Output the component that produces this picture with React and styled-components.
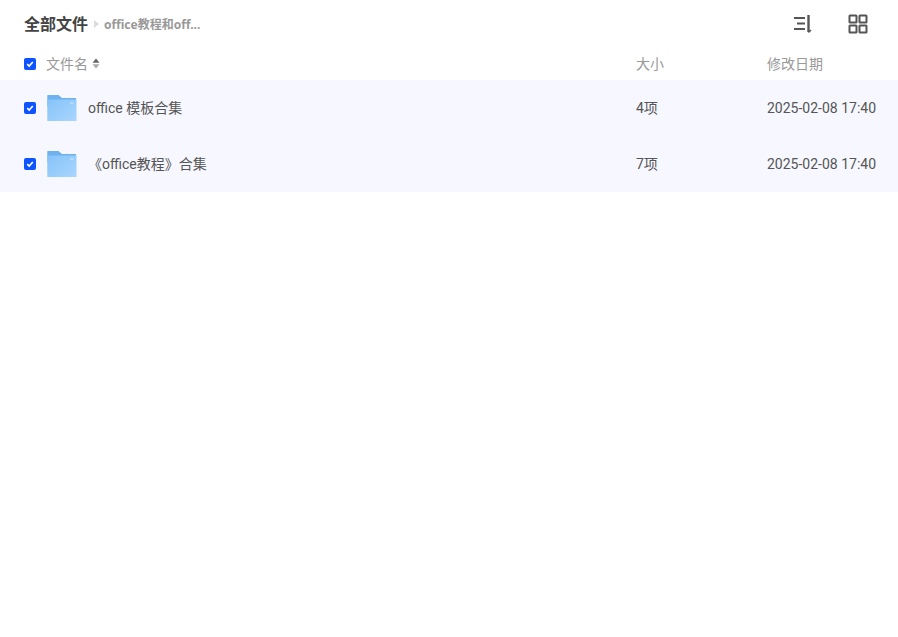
import React from "react";
import styled, { createGlobalStyle } from "styled-components";

const GlobalStyle = createGlobalStyle`
    html, body {
        margin: 0;
        padding: 0;
        background: #fff;
        font-family: Roboto, "Noto Sans CJK SC", sans-serif;
    }
`;

const Page = styled.div`
    width: 898px;
    height: 637px;
    overflow: hidden;
    background: #fff;
`;

const Header = styled.div`
    height: 48px;
    display: flex;
    align-items: center;
    justify-content: space-between;
    padding: 0 26px 0 24px;
`;

const Crumbs = styled.div`
    display: flex;
    align-items: center;
`;

const CrumbRoot = styled.span`
    font-size: 16px;
    font-weight: 700;
    color: #444;
    margin-bottom: 2px;
`;

const CrumbArrow = styled.span`
    width: 0;
    height: 0;
    margin: 0 5px 1px 6px;
    border-left: 5px solid #dcdcdc;
    border-top: 4px solid transparent;
    border-bottom: 4px solid transparent;
`;

const CrumbCurrent = styled.span`
    font-family: "Noto Sans", "Noto Sans CJK SC", sans-serif;
    font-size: 12px;
    font-weight: 700;
    color: #999;
`;

const Tools = styled.div`
    display: flex;
    align-items: center;
    gap: 28px;
`;

const ToolIcon = styled.svg`
    display: block;
    width: 28px;
    height: 28px;
    color: #555;
`;

const Grid = styled.div`
    display: grid;
    grid-template-columns: 612px 131px 1fr;
    align-items: center;
    padding-left: 24px;
    height: ${(props) => (props.$head ? "32px" : "56px")};
    background: ${(props) => (props.$selected ? "#f6f7ff" : "#fff")};
    font-size: 14px;
    color: ${(props) => (props.$head ? "#999" : "#555")};
`;

const NameCell = styled.div`
    display: flex;
    align-items: center;
`;

const Label = styled.span`
    margin-bottom: 2px;
`;

const Check = styled.span`
    width: 12px;
    height: 12px;
    flex: none;
    border-radius: 2px;
    background: #0d53ff;
    display: flex;
    align-items: center;
    justify-content: center;
`;

const HeadLabel = styled(Label)`
    margin-left: 10px;
`;

const SortMark = styled.svg`
    width: 8px;
    height: 11px;
    margin: 0 0 1px 4px;
`;

const FolderIcon = styled.svg`
    width: 30px;
    height: 28px;
    margin-left: 11px;
    flex: none;
`;

const FileName = styled(Label)`
    margin-left: 11px;
`;

function Tick() {
    return (
        <Check>
            <svg width="8" height="8" viewBox="0 0 8 8">
                <path d="M1.2 4.2 3.2 6.1 6.8 2" fill="none" stroke="#fff" strokeWidth="1.6" />
            </svg>
        </Check>
    );
}

function Folder({ id }) {
    return (
        <FolderIcon viewBox="0 0 30 28">
            <defs>
                <linearGradient id={id} x1="0" y1="0" x2="1" y2="1">
                    <stop offset="0" stopColor="#86c3f8" />
                    <stop offset="1" stopColor="#a9d6fe" />
                </linearGradient>
            </defs>
            <path d="M.3 1.5Q.3 1 .8 1H11.5L15 4H29V12H.3Z" fill="#6db2ef" />
            <path d="M.3 5.5H29.5V27H.8Q.3 27 .3 26.5Z" fill={`url(#${id})`} />
            <rect x="23" y="8" width="3.5" height="2" fill="#b4dbfd" />
        </FolderIcon>
    );
}

const rows = [
    { id: "a", name: "office 模板合集", size: "4项", date: "2025-02-08 17:40" },
    { id: "b", name: "《office教程》合集", size: "7项", date: "2025-02-08 17:40" },
];

export default function App() {
    return (
        <Page>
            <GlobalStyle />
            <Header>
                <Crumbs>
                    <CrumbRoot>全部文件</CrumbRoot>
                    <CrumbArrow />
                    <CrumbCurrent>office教程和off...</CrumbCurrent>
                </Crumbs>
                <Tools>
                    <ToolIcon viewBox="0 0 28 28" fill="none" stroke="currentColor" strokeWidth="2">
                        <path d="M6 8H17M9 13.5H17M6 19H17" />
                        <path d="M20.5 5V22" strokeWidth="2.4" />
                        <path d="M20.5 22.5 23 20" strokeWidth="1.4" />
                    </ToolIcon>
                    <ToolIcon viewBox="0 0 28 28" fill="none" stroke="currentColor" strokeWidth="2">
                        <rect x="5.5" y="5.5" width="7" height="7" rx=".5" />
                        <rect x="15.5" y="5.5" width="7" height="7" rx=".5" />
                        <rect x="5.5" y="15.5" width="7" height="7" rx=".5" />
                        <rect x="15.5" y="15.5" width="7" height="7" rx=".5" />
                    </ToolIcon>
                </Tools>
            </Header>
            <Grid $head>
                <NameCell>
                    <Tick />
                    <HeadLabel>文件名</HeadLabel>
                    <SortMark viewBox="0 0 8 11">
                        <path d="M4 .5 7.5 4.7H.5Z" fill="#666" />
                        <path d="M4 10.5 .5 6.3H7.5Z" fill="#aaa" />
                    </SortMark>
                </NameCell>
                <Label>大小</Label>
                <Label>修改日期</Label>
            </Grid>
            {rows.map((row) => (
                <Grid $selected key={row.id}>
                    <NameCell>
                        <Tick />
                        <Folder id={`folder-${row.id}`} />
                        <FileName>{row.name}</FileName>
                    </NameCell>
                    <Label>{row.size}</Label>
                    <span>{row.date}</span>
                </Grid>
            ))}
        </Page>
    );
}
